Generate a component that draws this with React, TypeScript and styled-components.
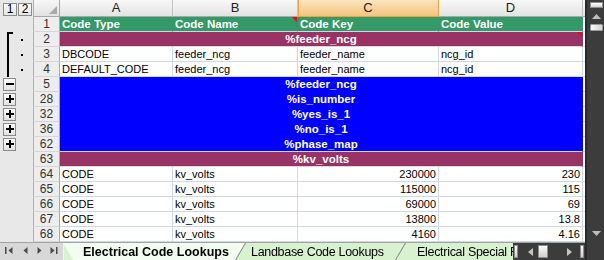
import React from "react";
import styled, { createGlobalStyle } from "styled-components";

const colors = {
  grid: "#d0d7e5",
  green: "#339966",
  maroon: "#993366",
  blue: "#0000ff",
  outlineBg: "#e8e8e8",
  headBg: "#ededed",
  headLine: "#c4c4c4",
  scroll: "#3c3c3c",
  tabActive: "#f3fcf0",
  tab: "#d8f2cf",
};

const cols = [113, 125, 141, 144];
const letters = ["A", "B", "C", "D"];

type OutlineKind = "bracketTop" | "bracket" | "minus" | "plus" | undefined;

type SheetRowData =
  | { n: number; kind: "head"; cells: string[]; outline?: OutlineKind }
  | { n: number; kind: "title"; fill: string; text: string; line: string; outline?: OutlineKind; comment?: boolean }
  | { n: number; kind: "data"; cells: string[]; outline?: OutlineKind };

const rows: SheetRowData[] = [
  { n: 1, kind: "head", cells: ["Code Type", "Code Name", "Code Key", "Code Value"] },
  { n: 2, kind: "title", fill: colors.maroon, text: "%feeder_ncg", line: colors.grid, outline: "bracketTop", comment: true },
  { n: 3, kind: "data", cells: ["DBCODE", "feeder_ncg", "feeder_name", "ncg_id"], outline: "bracket" },
  { n: 4, kind: "data", cells: ["DEFAULT_CODE", "feeder_ncg", "feeder_name", "ncg_id"], outline: "bracket" },
  { n: 5, kind: "title", fill: colors.blue, text: "%feeder_ncg", line: colors.blue, outline: "minus" },
  { n: 28, kind: "title", fill: colors.blue, text: "%is_number", line: colors.blue, outline: "plus" },
  { n: 32, kind: "title", fill: colors.blue, text: "%yes_is_1", line: colors.blue, outline: "plus" },
  { n: 36, kind: "title", fill: colors.blue, text: "%no_is_1", line: colors.blue, outline: "plus" },
  { n: 62, kind: "title", fill: colors.blue, text: "%phase_map", line: colors.grid, outline: "plus" },
  { n: 63, kind: "title", fill: colors.maroon, text: "%kv_volts", line: colors.grid },
  { n: 64, kind: "data", cells: ["CODE", "kv_volts", "230000", "230"] },
  { n: 65, kind: "data", cells: ["CODE", "kv_volts", "115000", "115"] },
  { n: 66, kind: "data", cells: ["CODE", "kv_volts", "69000", "69"] },
  { n: 67, kind: "data", cells: ["CODE", "kv_volts", "13800", "13.8"] },
  { n: 68, kind: "data", cells: ["CODE", "kv_volts", "4160", "4.16"] },
];

const tabs = [
  { name: "Electrical Code Lookups", active: true, w: 182, pad: 20 },
  { name: "Landbase Code Lookups", w: 170, pad: 16 },
  { name: "Electrical Special Features", w: 200, pad: 22 },
];

const GlobalStyle = createGlobalStyle`
  * { box-sizing: border-box; }
  html, body { margin: 0; padding: 0; overflow: hidden; background: #fff; }
  body { font-family: "Liberation Sans", Arial, sans-serif; }
`;

const Window = styled.div`
  display: flex;
  width: 604px;
  height: 260px;
  overflow: hidden;
`;

const Main = styled.div`
  display: flex;
  flex-direction: column;
  width: 585px;
`;

const Sheet = styled.div`
  display: flex;
  flex-direction: column;
  height: 242px;
`;

const Row = styled.div<{ $h: number }>`
  display: flex;
  height: ${(p) => p.$h}px;
`;

/* outline pane */
const OutlinePane = styled.div`
  display: flex;
  align-items: flex-start;
  width: 33px;
  flex: none;
  background: ${colors.outlineBg};
`;

const LevelBar = styled(OutlinePane)`
  gap: 1px;
  padding: 3px 0 0 3px;
`;

const LevelButton = styled.div`
  width: 14px;
  height: 13px;
  border: 1px solid #8a8a8a;
  background: linear-gradient(#fafafa, #e6e6e6);
  font-size: 12px;
  line-height: 11px;
  text-align: center;
  color: #000;
`;

const Bracket = styled.div<{ $top?: boolean }>`
  width: 6px;
  height: 100%;
  margin-left: 7px;
  border-left: 2px solid #000;
  border-top: ${(p) => (p.$top ? "2px solid #000" : "none")};
`;

const Dot = styled.div`
  width: 2px;
  height: 2px;
  margin: 7px 0 0 8px;
  background: #000;
`;

const ToggleButton = styled.div`
  width: 13px;
  height: 13px;
  margin: 1px 0 0 3px;
  border: 1px solid #8a8a8a;
  background: linear-gradient(#fdfdfd, #e2e2e2);
  display: flex;
`;

/* headers */
const Corner = styled.div`
  width: 27px;
  flex: none;
  display: flex;
  align-items: flex-end;
  justify-content: flex-end;
  padding: 0 2px 2px 0;
  background: linear-gradient(#f7f7f7, #e2e2e2);
  border-left: 1px solid #b3b3b3;
  border-right: 1px solid #a8a8a8;
  border-bottom: 1px solid #a8a8a8;
`;

const ColHeader = styled.div<{ $w: number; $selected?: boolean }>`
  width: ${(p) => p.$w}px;
  flex: none;
  text-align: center;
  font-size: 13px;
  line-height: 16px;
  color: #222;
  background: ${(p) =>
    p.$selected ? "linear-gradient(#fbe4c0, #f5c47c)" : "linear-gradient(#f8f8f8, #e3e3e3)"};
  border-right: 1px solid ${(p) => (p.$selected ? "#f2a13c" : colors.headLine)};
  border-bottom: 1px solid ${(p) => (p.$selected ? "#f2a13c" : "#a8a8a8")};
  box-shadow: ${(p) => (p.$selected ? "inset 1px 0 0 #f2a13c" : "none")};
`;

const RowNum = styled.div`
  width: 27px;
  flex: none;
  text-align: center;
  font-size: 12px;
  line-height: 15px;
  color: #333;
  background: ${colors.headBg};
  border-left: 1px solid #b3b3b3;
  border-right: 1px solid #a8a8a8;
  border-bottom: 1px solid #d6d6d6;
`;

/* cells */
const Cell = styled.div<{
  $w: number;
  $fill?: string;
  $line?: string;
  $right?: boolean;
  $center?: boolean;
  $bold?: boolean;
  $comment?: boolean;
}>`
  position: relative;
  width: ${(p) => p.$w}px;
  flex: none;
  padding: 0 2px;
  font-size: ${(p) => (p.$bold ? "11.5px" : "11px")};
  line-height: 15px;
  white-space: nowrap;
  overflow: hidden;
  background: ${(p) => p.$fill ?? "#fff"};
  color: ${(p) => (p.$fill ? "#fff" : "#000")};
  font-weight: ${(p) => (p.$bold ? 700 : 400)};
  text-align: ${(p) => (p.$center ? "center" : p.$right ? "right" : "left")};
  border-right: 1px solid ${(p) => p.$fill ?? colors.grid};
  border-bottom: 1px solid ${(p) => p.$line ?? colors.grid};

  &::after {
    content: "";
    display: ${(p) => (p.$comment ? "block" : "none")};
    position: absolute;
    top: 0;
    right: 0;
    border-top: 5px solid #ff0000;
    border-left: 5px solid transparent;
  }
`;

const Sliver = styled.div<{ $head?: boolean }>`
  width: 2px;
  flex: none;
  background: ${(p) => (p.$head ? "linear-gradient(#f8f8f8, #e3e3e3)" : "#fff")};
  border-bottom: 1px solid ${(p) => (p.$head ? "#a8a8a8" : colors.grid)};
`;

/* vertical scrollbar */
const VScroll = styled.div`
  width: 19px;
  flex: none;
  display: flex;
  flex-direction: column;
  align-items: center;
  background: ${colors.scroll};
  border-left: 2px solid #2a2a2a;
  padding: 2px 0 24px 1px;
`;

const SplitBox = styled.div`
  width: 13px;
  height: 6px;
  border: 1px solid #8d8d8d;
  background: linear-gradient(#ffffff, #d4d4d4);
`;

const VThumb = styled.div`
  width: 13px;
  height: 7px;
  margin-top: 5px;
  border: 1px solid #9a9a9a;
  border-radius: 1px;
  background: linear-gradient(90deg, #fbfbfb, #d2d2d2);
`;

const Spacer = styled.div`
  flex: 1;
`;

/* sheet tabs */
const TabBar = styled.div`
  display: flex;
  height: 18px;
  border-top: 1px solid #a3a3a3;
  background: #d8d8d8;
`;

const Nav = styled.div`
  width: 63px;
  flex: none;
  display: flex;
`;

const TabStrip = styled.div`
  flex: 1;
  display: flex;
  overflow: hidden;
  background: ${colors.tab};
  border-left: 1px solid #f4f4f4;
`;

const Tab = styled.div<{ $w: number; $z: number }>`
  flex: none;
  width: ${(p) => p.$w}px;
  height: 17px;
  margin-left: -10px;
  position: relative;
  z-index: ${(p) => p.$z};
  filter: drop-shadow(1px 0 0 #808080);

  &:first-child {
    margin-left: -1px;
  }
`;

const TabFace = styled.div<{ $active?: boolean; $pad: number }>`
  height: 100%;
  padding: 1px 0 0 ${(p) => p.$pad}px;
  background: ${(p) => (p.$active ? colors.tabActive : colors.tab)};
  clip-path: polygon(0 0, 100% 0, calc(100% - 10px) 100%, 10px 100%);
  font-size: 12.5px;
  line-height: 16px;
  white-space: nowrap;
  color: #000;
  font-weight: ${(p) => (p.$active ? 700 : 400)};
  letter-spacing: ${(p) => (p.$active ? "0" : "-0.3px")};
`;

const HScroll = styled.div`
  width: 72px;
  flex: none;
  display: flex;
  align-items: center;
  background: ${colors.scroll};
`;

const HBar = styled.div<{ $w: number; $ml: number }>`
  width: ${(p) => p.$w}px;
  height: 13px;
  margin-left: ${(p) => p.$ml}px;
  border: 1px solid #8d8d8d;
  background: linear-gradient(#fbfbfb, #cfcfcf);
`;

const Arrow = styled.svg<{ $ml?: number; $mr?: number; $mt?: number }>`
  display: block;
  flex: none;
  margin-left: ${(p) => p.$ml ?? 0}px;
  margin-right: ${(p) => p.$mr ?? 0}px;
  margin-top: ${(p) => p.$mt ?? 0}px;
`;

const EndGap = styled.div`
  width: 1px;
  flex: none;
`;

function Outline({ kind }: { kind: OutlineKind }) {
  if (kind === "bracketTop" || kind === "bracket") {
    return (
      <OutlinePane>
        <Bracket $top={kind === "bracketTop"} />
        <Dot />
      </OutlinePane>
    );
  }
  if (kind === "minus" || kind === "plus") {
    return (
      <OutlinePane>
        <ToggleButton>
          <svg width="11" height="11" viewBox="0 0 11 11" shapeRendering="crispEdges">
            <rect x="2" y="4" width="8" height="2" fill="#000" />
            {kind === "plus" && <rect x="5" y="1" width="2" height="8" fill="#000" />}
          </svg>
        </ToggleButton>
      </OutlinePane>
    );
  }
  return <OutlinePane />;
}

function SheetRow({ row }: { row: SheetRowData }) {
  return (
    <Row $h={15}>
      <Outline kind={row.outline} />
      <RowNum>{row.n}</RowNum>
      {row.kind === "title" ? (
        <Cell $w={523} $fill={row.fill} $line={row.line} $center $bold $comment={row.comment}>
          {row.text}
        </Cell>
      ) : (
        row.cells.map((text, i) => (
          <Cell
            key={i}
            $w={cols[i]}
            $fill={row.kind === "head" ? colors.green : undefined}
            $bold={row.kind === "head"}
            $right={row.kind === "data" && i >= 2 && /^[\d.]+$/.test(text)}
            $comment={row.kind === "head" && i === 1}
          >
            {text}
          </Cell>
        ))
      )}
      <Sliver />
    </Row>
  );
}

export default function App() {
  return (
    <>
      <GlobalStyle />
      <Window>
        <Main>
          <Sheet>
            <Row $h={17}>
              <LevelBar>
                <LevelButton>1</LevelButton>
                <LevelButton>2</LevelButton>
              </LevelBar>
              <Corner>
                <svg width="8" height="8" viewBox="0 0 8 8">
                  <path d="M8 0 L8 8 L0 8 Z" fill="#a9a9a9" />
                </svg>
              </Corner>
              {letters.map((l, i) => (
                <ColHeader key={l} $w={cols[i]} $selected={l === "C"}>
                  {l}
                </ColHeader>
              ))}
              <Sliver $head />
            </Row>
            {rows.map((r) => (
              <SheetRow key={r.n} row={r} />
            ))}
          </Sheet>
          <TabBar>
            <Nav>
              <svg width="63" height="17" viewBox="0 0 63 17">
                <g fill="#4a4a4a">
                  <rect x="5" y="4" width="1.5" height="7" />
                  <path d="M12.5 4 L8.5 7.5 L12.5 11 Z" />
                  <path d="M27.5 4 L23.5 7.5 L27.5 11 Z" />
                  <path d="M37.5 4 L41.5 7.5 L37.5 11 Z" />
                  <path d="M50.5 4 L54.5 7.5 L50.5 11 Z" />
                  <rect x="56" y="4" width="1.5" height="7" />
                </g>
              </svg>
            </Nav>
            <TabStrip>
              {tabs.map((t, i) => (
                <Tab key={t.name} $w={t.w} $z={t.active ? 10 : tabs.length - i}>
                  <TabFace $active={t.active} $pad={t.pad}>
                    {t.name}
                  </TabFace>
                </Tab>
              ))}
            </TabStrip>
            <HScroll>
              <HBar $w={4} $ml={1} />
              <Arrow width="6" height="8" viewBox="0 0 6 8" $ml={9}>
                <path d="M6 0 L1 4 L6 8 Z" fill="#c4c4c4" />
              </Arrow>
              <HBar $w={10} $ml={5} />
              <Spacer />
              <Arrow width="6" height="8" viewBox="0 0 6 8" $mr={7}>
                <path d="M0 0 L5 4 L0 8 Z" fill="#c4c4c4" />
              </Arrow>
              <HBar $w={4} $ml={0} />
              <EndGap />
            </HScroll>
          </TabBar>
        </Main>
        <VScroll>
          <SplitBox />
          <Arrow width="9" height="5" viewBox="0 0 9 5" $mt={6}>
            <path d="M0 5 L4.5 0 L9 5 Z" fill="#bdbdbd" />
          </Arrow>
          <VThumb />
          <Spacer />
          <Arrow width="9" height="5" viewBox="0 0 9 5">
            <path d="M0 0 L4.5 5 L9 0 Z" fill="#bdbdbd" />
          </Arrow>
        </VScroll>
      </Window>
    </>
  );
}
